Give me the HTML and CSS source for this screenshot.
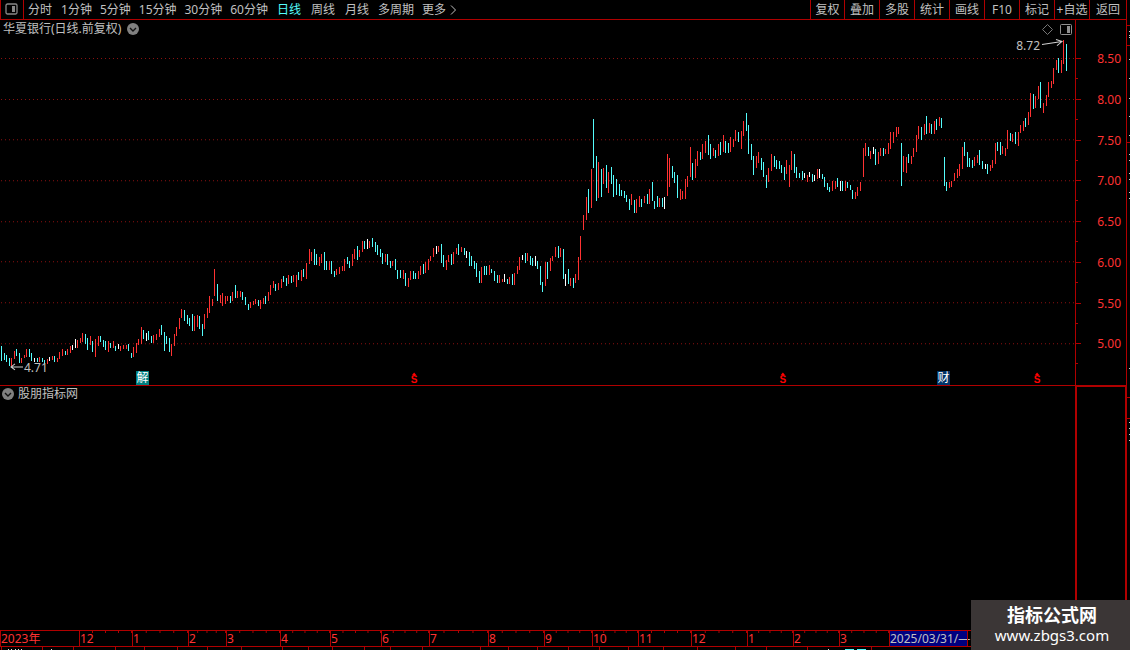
FILE: index.html
```html
<!DOCTYPE html>
<html lang="zh-CN">
<head>
<meta charset="utf-8">
<title>华夏银行 日线</title>
<link rel="stylesheet" href="styles.css">
</head>
<body>
<div class="terminal">
  <div class="window">
    <header class="toolbar">
      <button class="layout-toggle" aria-label="布局">
        <svg width="13" height="12" viewBox="0 0 13 12"><rect x="1" y="1" width="11" height="10" rx="1.5" fill="none" stroke="#888" stroke-width="1.3"/><rect x="7" y="3" width="3" height="6" fill="#888"/></svg>
      </button>
      <nav class="periods">
        <button class="word">分时</button>
        <button>1分钟</button>
        <button>5分钟</button>
        <button>15分钟</button>
        <button>30分钟</button>
        <button>60分钟</button>
        <button class="word active">日线</button>
        <button class="word">周线</button>
        <button class="word">月线</button>
        <button>多周期</button>
        <button class="more">更多<svg width="7" height="10" viewBox="0 0 7 10"><path d="M1 .5L5.5 5L1 9.5" fill="none" stroke="#c0c0c0"/></svg></button>
      </nav>
      <nav class="tools">
        <button>复权</button>
        <button>叠加</button>
        <button>多股</button>
        <button>统计</button>
        <button>画线</button>
        <button>F10</button>
        <button>标记</button>
        <button>+自选</button>
        <button>返回</button>
      </nav>
    </header>

    <main class="panes">
      <section class="pane price-pane">
        <div class="plot">
          <svg class="chart" id="chart" viewBox="0 20 1075 365" preserveAspectRatio="none">
            <path class="grid" d="M1 58.5H1075M1 99.5H1075M1 139.5H1075M1 180.5H1075M1 221.5H1075M1 261.5H1075M1 302.5H1075M1 343.5H1075"/>
            <path id="up" class="bar up"/>
            <path id="down" class="bar down"/>
            <path id="flat" class="bar flat"/>
            <path class="pointer" d="M1042 44.5L1062 41.5M1056 39.5L1062 41.5L1057 45.5M23 366.5H11M15 363.5L11 366.5L15 369.5"/>
          </svg>
          <h1 class="pane-title stock">华夏银行(日线.前复权)
            <svg width="12" height="12" viewBox="0 0 12 12"><circle cx="6" cy="6" r="6" fill="#808080"/><path d="M3 5L6 8L9 5" fill="none" stroke="#111" stroke-width="1.4"/></svg>
          </h1>
          <div class="pane-icons">
            <svg width="11" height="11" viewBox="0 0 11 11"><path d="M5.500 .5L10.500 5.500L5.500 10.500L.5 5.500Z" fill="none" stroke="#777"/></svg>
            <svg width="12" height="11" viewBox="0 0 12 11"><rect x=".5" y=".5" width="11" height="10" rx="1" fill="none" stroke="#909090"/><rect x="7" y="2" width="3" height="7" fill="#909090"/></svg>
          </div>
          <span class="extreme high">8.72</span>
          <span class="extreme low">4.71</span>
          <span class="badge teal" style="left:12.65%">解</span>
          <span class="split" style="left:38.2%">S</span>
          <span class="split" style="left:72.5%">S</span>
          <span class="badge navy" style="left:87.16%">财</span>
          <span class="split" style="left:96.15%">S</span>
        </div>
        <ol class="axis">
          <li>8.50</li><li>8.00</li><li>7.50</li><li>7.00</li><li>6.50</li><li>6.00</li><li>5.50</li><li>5.00</li>
        </ol>
      </section>

      <section class="pane indicator-pane">
        <div class="plot">
          <h2 class="pane-title indicator">
            <svg width="12" height="12" viewBox="0 0 12 12"><circle cx="6" cy="6" r="6" fill="#808080"/><path d="M3 5L6 8L9 5" fill="none" stroke="#111" stroke-width="1.4"/></svg>
            股朋指标网</h2>
        </div>
        <div class="axis-empty"></div>
      </section>
    </main>

    <div class="timeline">
      <span class="year">2023年</span>
      <span>12</span>
      <span>1</span>
      <span>2</span>
      <span>3</span>
      <span>4</span>
      <span>5</span>
      <span>6</span>
      <span>7</span>
      <span>8</span>
      <span>9</span>
      <span>10</span>
      <span>11</span>
      <span>12</span>
      <span>1</span>
      <span>2</span>
      <span>3</span>
      <span class="cursor-date">2025/03/31/—</span>
      <span></span>
    </div>
    <svg class="tabs-edge" viewBox="0 0 1126 3" preserveAspectRatio="none">
      <path d="M1.500 0V3M42.500 0V3M73.500 0V3M115.500 0V3M144.500 0V3M177.500 0V3M207.500 0V3M241.500 0V3M282.500 0V3M308.500 0V3M332.500 0V3M364.500 0V3M390.500 0V3M422.500 0V3M480.500 0V3M508.500 0V3M537.500 0V3M568.500 0V3M599.500 0V3M628.500 0V3M663.500 0V3M697.500 0V3M735.500 0V3M766.500 0V3M807.500 0V3M871.500 0V3" stroke="#b00000"/>
      <path d="M8 2.500h1M11 2.500h1M15 2.500h1M18 2.500h1M21 2.500h1M51 2.500h1M828 2.500h1" stroke="#ddd"/>
      <path d="M845 2.500h9M857 2.500h9" stroke="#54fcfc"/>
    </svg>
  </div>
  <svg class="side-edge" viewBox="0 0 3 650" preserveAspectRatio="none">
    <path d="M0 25.500H3M0 45.500H3M0 142.500H3M0 397.500H3M0 418.500H3" stroke="#b00000"/>
    <path d="M2 31.500h1M2 35.500h1M2 37.500h1M2 59.500h1M2 78.500h1M2 98.500h1M2 116.500h1M2 135.500h1M2 154.500h1M2 160.500h1M2 173.500h1M2 179.500h1M2 192.500h1M2 198.500h1M2 368.500h1M2 422.500h1M2 428.500h1M2 434.500h1M2 440.500h1" stroke="#ccc"/>
  </svg>
  <aside class="site-card">
    <strong>指标公式网</strong>
    <span>www.zbgs3.com</span>
  </aside>
</div>
<script src="chart.js"></script>
</body>
</html>
```
FILE: styles.css
```css
* {
  box-sizing: border-box;
}

body {
  margin: 0;
  background: #000;
  color: #c0c0c0;
  font: 12px/16px "Noto Sans", "Noto Sans CJK SC", sans-serif;
}

button {
  padding: 0;
  border: 0;
  background: none;
  color: inherit;
  font: inherit;
  white-space: nowrap;
  cursor: pointer;
}

svg {
  display: block;
}

.terminal {
  display: grid;
  grid-template-columns: minmax(0, 1fr) 3px;
  height: 100vh;
  position: relative;
}

.window {
  display: flex;
  flex-direction: column;
  min-height: 0;
  border-right: 1px solid #b00000;
}

.toolbar {
  display: flex;
  flex: none;
  height: 20px;
  border-bottom: 1px solid #b00000;
}

.layout-toggle {
  display: flex;
  align-items: center;
  justify-content: center;
  width: 24px;
  padding: 0 2px 2px 0;
  border: solid #b00000;
  border-width: 0 1px;
}

.periods {
  display: flex;
  align-items: center;
  gap: 8px;
  padding-left: 3px;
}

.periods .word {
  padding: 0 1px;
}

.periods .active {
  color: #54fcfc;
}

.periods .more {
  display: flex;
  align-items: center;
  gap: 4px;
}

.tools {
  display: flex;
  margin-left: auto;
}

.tools button {
  width: 35px;
  border-left: 1px solid #b00000;
}

.tools button:first-child {
  width: 34px;
}

.tools button:last-child {
  width: 37px;
}

.panes {
  display: flex;
  flex: 1;
  flex-direction: column;
  min-height: 0;
}

.pane {
  display: grid;
  grid-template-columns: minmax(0, 1fr) 51px;
  min-height: 0;
}

.price-pane {
  flex: 366 1 0;
  border-bottom: 1px solid #b00000;
}

.indicator-pane {
  flex: 244 1 0;
}

.plot {
  position: relative;
  min-height: 0;
}

.chart {
  width: 100%;
  height: 100%;
}

.grid {
  fill: none;
  stroke: #8c1010;
  stroke-dasharray: 1 3;
}

.bar {
  fill: none;
  shape-rendering: crispEdges;
}

.up {
  stroke: #ff3232;
}

.down {
  stroke: #54fcfc;
}

.flat {
  stroke: #fff;
}

.pointer {
  fill: none;
  stroke: #d0d0d0;
}

.pane-title {
  display: flex;
  align-items: center;
  gap: 6px;
  margin: 0;
  font-size: 12px;
  font-weight: 400;
}

.stock {
  position: absolute;
  top: 1px;
  left: 3px;
}

.indicator {
  gap: 4px;
  padding: 0 0 0 2px;
}

.pane-icons {
  position: absolute;
  top: 4px;
  right: 3px;
  display: flex;
  gap: 7px;
}

.extreme {
  position: absolute;
}

.high {
  top: 18px;
  right: 35px;
}

.low {
  bottom: 9px;
  left: 24px;
}

.badge {
  position: absolute;
  bottom: 0;
  width: 13px;
  height: 14px;
  line-height: 14px;
  text-align: center;
  color: #fff;
}

.teal {
  background: #008080;
}

.navy {
  background: #003366;
}

.split {
  position: absolute;
  bottom: 0;
  width: 7px;
  color: #f00;
  font: 700 10px/10px "Liberation Sans", sans-serif;
  text-align: center;
}

.split::before {
  content: "";
  display: block;
  width: 5px;
  height: 3px;
  margin: 0 auto;
  background: #f00;
  clip-path: polygon(50% 0, 100% 100%, 0 100%);
}

.axis {
  display: flex;
  flex-direction: column;
  justify-content: space-between;
  margin: 0;
  padding: 31px 0 33px;
  border-left: 1px solid #b00000;
  color: #ff3232;
  list-style: none;
}

.axis li {
  position: relative;
  padding-right: 5px;
  text-align: right;
}

.axis li::before,
.axis li::after {
  content: "";
  position: absolute;
  left: 0;
  height: 1px;
  background: #b00000;
}

.axis li::before {
  top: 7px;
  width: 5px;
}

.axis li::after {
  top: 27px;
  width: 2px;
}

.axis-empty {
  border: solid #b00000;
  border-width: 1px 1px 0 2px;
}

.timeline {
  display: grid;
  grid-template-columns: 79fr 53fr 56fr 38fr 54fr 50fr 51fr 48fr 59fr 56fr 48fr 46fr 53fr 56fr 46fr 46fr 50fr 78fr 159fr;
  flex: none;
  height: 17px;
  border: solid #b00000;
  border-width: 1px 0;
  color: #ff3232;
  line-height: 15px;
}

.timeline span {
  min-width: 0;
  border-left: 1px solid #b00000;
  background: linear-gradient(to right, #b00000 1px, transparent 1px) -1px 0 / 25% 2px repeat-x;
  white-space: nowrap;
}

.timeline .year {
  background: none;
}

.timeline .cursor-date {
  background: #000080;
  color: #c0c0c0;
}

.tabs-edge {
  flex: none;
  width: 100%;
  height: 3px;
}

.side-edge {
  width: 3px;
  height: 100%;
}

.site-card {
  position: absolute;
  right: 0;
  bottom: 0;
  display: flex;
  flex-direction: column;
  align-items: center;
  width: 159px;
  height: 50px;
  padding: 3px 0 0 3px;
  background: #3b3636;
  color: #fff;
}

.site-card strong {
  font: 700 18px/23px "Noto Sans CJK SC", sans-serif;
}

.site-card span {
  font: 15px/18px "Noto Sans", sans-serif;
}
```
FILE: chart.js
```javascript
// Daily ranges: x, top, bottom, kind (u = up, d = down, f = flat)
const bars = `
1 346 361 d,4 353 360 d,6 355 362 d,9 358 366 d,11 358 366 u,14 351 359 u,16 349 356 d,19 353 363 d,21 358 363 u,24 355 358 u,
26 349 357 u,29 349 357 d,31 353 361 d,34 358 362 f,37 358 362 d,39 357 362 u,42 358 362 d,44 360 364 d,47 359 364 u,49 357 361 f,
52 356 360 u,54 356 362 d,57 358 362 u,59 352 359 u,62 349 356 u,65 351 355 d,67 349 355 u,70 346 353 u,72 345 350 f,75 339 348 f,
77 340 348 u,80 338 343 u,82 333 342 u,85 334 344 d,87 338 350 d,90 336 345 u,92 341 352 d,95 339 357 u,98 336 346 u,100 336 342 d,
103 340 347 d,105 341 350 d,108 341 352 u,110 343 348 d,113 341 348 u,115 346 351 d,118 344 349 f,120 346 351 u,123 345 349 u,126 345 349 u,
128 344 351 d,131 353 358 d,133 347 357 u,136 343 353 u,138 339 345 u,141 327 344 u,143 330 339 d,146 333 341 f,148 331 340 d,151 336 343 d,
153 335 343 u,156 334 340 u,159 329 337 u,161 325 335 d,164 332 351 d,166 336 344 d,169 338 352 d,171 344 356 u,174 334 346 u,176 327 336 u,
179 318 329 u,181 309 318 u,184 310 321 d,187 315 324 d,189 318 326 d,192 314 331 d,194 316 331 u,197 315 327 u,199 316 329 d,202 324 336 d,
204 314 329 u,207 308 318 u,209 296 313 u,212 299 306 u,214 269 296 u,217 284 301 d,220 295 303 u,222 293 306 u,225 296 304 u,227 296 301 u,
230 296 303 d,232 292 301 u,235 285 298 d,237 291 298 u,240 291 297 u,242 292 300 d,245 297 305 d,248 304 310 d,250 302 308 u,253 301 305 u,
255 299 304 u,258 300 306 d,260 300 309 u,263 298 304 u,265 296 304 d,268 292 301 u,270 285 295 u,273 281 288 u,275 284 291 d,278 283 290 u,
281 279 288 u,283 276 282 d,286 278 286 d,288 275 284 u,291 276 283 d,293 275 282 u,296 275 287 u,298 272 280 d,301 270 281 u,303 269 277 d,
306 263 279 u,309 249 264 u,311 252 261 u,314 249 265 d,316 254 265 d,319 257 266 u,321 254 263 u,324 252 270 d,326 261 270 d,329 261 270 u,
331 261 274 d,334 271 277 d,336 269 275 u,339 267 274 u,342 266 271 u,344 259 271 u,347 257 264 d,349 261 268 d,352 254 266 u,354 249 259 u,
357 246 260 d,359 250 257 u,362 241 252 u,364 241 249 d,367 239 249 f,369 241 248 u,372 238 247 d,375 242 252 d,377 245 255 d,380 249 257 d,
382 253 264 d,385 254 262 u,387 254 265 d,390 261 268 d,392 261 266 u,395 259 270 d,397 270 279 d,400 270 278 d,403 270 279 u,405 273 286 d,
408 278 287 u,410 271 280 u,413 271 279 d,415 273 279 d,418 271 279 u,420 266 275 u,423 264 274 d,425 262 273 u,428 259 270 u,430 256 261 u,
433 248 257 u,436 246 254 f,438 246 252 u,441 244 263 d,443 255 267 d,446 260 270 u,448 255 262 u,451 254 265 d,453 252 264 u,456 248 254 u,
458 244 255 d,461 247 252 u,464 248 255 d,466 251 258 f,469 252 266 d,471 256 266 d,474 261 269 d,476 263 277 d,479 271 283 d,481 267 283 u,
484 266 275 d,486 266 275 d,489 265 275 u,491 269 273 d,494 271 281 d,497 275 283 d,499 275 283 u,502 279 282 u,504 274 282 f,507 279 284 d,
509 277 284 u,512 274 285 d,514 273 285 u,517 266 274 u,519 257 270 u,522 255 260 f,525 253 263 d,527 253 261 u,530 256 265 d,532 258 266 d,
535 256 266 f,537 261 269 d,540 266 285 d,542 282 292 d,545 262 286 u,547 262 279 d,550 258 271 u,552 256 261 u,555 247 257 u,558 246 258 d,
560 248 257 u,563 249 279 d,565 274 286 f,568 269 284 d,570 278 286 u,573 278 288 d,575 274 283 u,578 257 280 u,580 236 260 u,583 215 230 u,
586 197 220 u,588 189 213 d,591 169 208 u,593 119 168 d,596 156 201 d,598 162 198 u,601 169 197 d,603 168 184 u,606 165 188 d,608 172 193 u,
611 167 184 d,613 175 197 d,616 179 195 d,619 184 196 d,621 190 196 d,624 191 198 d,626 195 202 d,629 199 210 d,631 194 205 u,634 200 213 d,
636 199 213 u,639 196 207 u,641 199 207 d,644 196 203 u,647 194 204 d,649 189 204 u,652 182 201 d,654 201 209 d,657 196 207 d,659 198 207 u,
662 198 207 d,664 197 209 f,667 154 196 u,669 158 187 u,672 166 178 d,674 172 183 d,677 175 198 d,680 189 200 u,682 191 199 u,685 179 199 u,
687 176 187 u,690 147 177 u,692 163 180 d,695 159 178 u,697 151 166 u,700 152 160 d,702 144 159 u,705 141 153 u,708 135 155 d,710 144 159 d,
713 148 156 u,715 150 158 d,718 144 156 u,720 142 155 d,723 135 152 u,725 141 153 d,728 143 153 d,730 137 152 u,733 139 147 u,735 130 141 u,
738 132 142 d,741 131 149 u,743 121 136 u,746 113 131 d,748 125 154 d,751 144 160 d,753 156 175 d,756 156 168 u,758 152 163 u,761 158 170 d,
763 162 177 d,766 175 188 d,768 168 182 u,771 154 171 u,774 156 167 d,776 160 169 d,779 161 169 d,781 165 173 d,784 167 180 d,786 160 174 u,
789 165 187 u,791 151 170 u,794 154 173 d,796 167 178 d,799 173 178 d,802 171 180 d,804 173 178 f,807 175 182 u,809 172 177 f,812 174 182 d,
814 175 181 f,817 169 179 u,819 169 178 f,822 174 179 d,824 177 187 d,827 183 190 d,829 187 192 d,832 181 191 u,835 181 189 u,837 178 187 d,
840 181 191 f,842 181 191 d,845 181 191 u,847 182 188 d,850 185 190 d,852 190 199 d,855 192 199 u,857 187 196 u,860 182 191 u,863 148 177 u,
865 143 156 u,868 147 156 d,870 151 159 u,873 147 154 f,875 149 165 d,878 152 164 u,880 148 156 u,883 148 156 d,885 149 154 u,888 143 154 u,
890 132 149 u,893 132 143 u,896 127 137 u,898 127 134 u,901 143 186 d,903 156 172 u,906 157 173 u,908 154 163 d,911 156 164 u,913 148 157 u,
916 135 152 u,918 126 139 u,921 127 140 d,924 124 135 u,926 116 134 d,929 123 133 u,931 124 134 d,934 121 134 u,936 119 130 d,939 117 126 u,
941 118 128 d,944 157 186 d,946 182 191 d,949 182 188 u,951 181 187 u,954 173 181 u,957 169 178 u,959 164 176 u,962 147 169 u,964 142 156 d,
967 152 167 d,969 158 167 d,972 160 168 d,974 157 166 u,977 155 163 u,979 150 165 d,982 161 169 d,985 164 169 f,987 164 174 d,990 165 171 u,
992 160 168 u,995 143 164 u,997 142 151 d,1000 142 155 d,1002 146 154 u,1005 148 156 u,1007 130 149 u,1010 133 141 d,1012 134 142 u,1015 132 144 d,
1018 132 146 u,1020 125 133 u,1023 121 131 u,1025 118 127 d,1028 112 125 u,1030 93 117 u,1033 94 109 d,1035 96 108 u,1038 86 99 u,1040 82 108 d,
1043 103 113 u,1046 95 106 u,1048 82 97 u,1051 81 88 u,1053 68 84 u,1056 60 70 u,1058 58 73 d,1061 60 73 u,1063 40 64 u,1066 44 71 d`;

const paths = { u: "", d: "", f: "" };
for (const bar of bars.split(",")) {
  const [x, top, bottom, kind] = bar.trim().split(" ");
  paths[kind] += `M${x}.5 ${top}V${bottom}`;
}
document.getElementById("up").setAttribute("d", paths.u);
document.getElementById("down").setAttribute("d", paths.d);
document.getElementById("flat").setAttribute("d", paths.f);
```
